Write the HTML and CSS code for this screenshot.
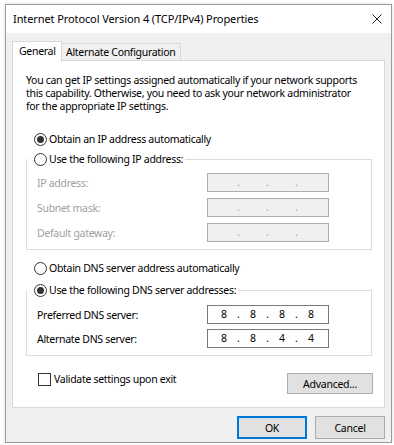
FILE: index.html
```html
<!DOCTYPE html>
<html lang="en">
<head>
    <meta charset="UTF-8">
    <title>Internet Protocol Version 4 (TCP/IPv4) Properties</title>
    <link rel="stylesheet" href="styles.css">
</head>
<body>
<div class="window">
    <!-- Title bar -->
    <div class="titlebar">
        <span class="title">Internet Protocol Version 4 (TCP/IPv4) Properties</span>
        <svg class="close" width="10" height="10" viewBox="0 0 10 10">
            <path d="M0.5 0.5 L9.5 9.5 M9.5 0.5 L0.5 9.5" stroke="#222" stroke-width="1" fill="none"/>
        </svg>
    </div>

    <div class="content">
        <div class="tabs">
            <div class="tab active">General</div>
            <div class="tab">Alternate Configuration</div>
        </div>

        <div class="panel">
            <p class="intro">You can get IP settings assigned automatically if your network supports<br>
                this capability. Otherwise, you need to ask your network administrator<br>
                for the appropriate IP settings.</p>

            <div class="option first"><span class="radio checked"></span>Obtain an IP address automatically</div>

            <fieldset class="group">
                <legend><span class="option"><span class="radio"></span>Use the following IP address:</span></legend>
                <div class="row disabled">
                    <span class="label">IP address:</span>
                    <div class="ipbox"><span></span><span>.</span><span></span><span>.</span><span></span><span>.</span><span></span></div>
                </div>
                <div class="row disabled">
                    <span class="label">Subnet mask:</span>
                    <div class="ipbox"><span></span><span>.</span><span></span><span>.</span><span></span><span>.</span><span></span></div>
                </div>
                <div class="row disabled">
                    <span class="label">Default gateway:</span>
                    <div class="ipbox"><span></span><span>.</span><span></span><span>.</span><span></span><span>.</span><span></span></div>
                </div>
            </fieldset>

            <div class="option dns-auto"><span class="radio"></span>Obtain DNS server address automatically</div>

            <fieldset class="group dns">
                <legend><span class="option"><span class="radio checked"></span>Use the following DNS server addresses:</span></legend>
                <div class="row">
                    <span class="label">Preferred DNS server:</span>
                    <div class="ipbox"><span>8</span><span>.</span><span>8</span><span>.</span><span>8</span><span>.</span><span>8</span></div>
                </div>
                <div class="row">
                    <span class="label">Alternate DNS server:</span>
                    <div class="ipbox"><span>8</span><span>.</span><span>8</span><span>.</span><span>4</span><span>.</span><span>4</span></div>
                </div>
            </fieldset>

            <div class="panel-footer">
                <label class="check"><span class="checkbox"></span>Validate settings upon exit</label>
                <button class="btn advanced">Advanced...</button>
            </div>
        </div>

        <div class="dialog-buttons">
            <button class="btn default">OK</button>
            <button class="btn">Cancel</button>
        </div>
    </div>
</div>
</body>
</html>
```
FILE: styles.css
```css
/* Reset */
* {
    box-sizing: border-box;
    margin: 0;
    padding: 0;
}

body {
    font-family: "Noto Sans", "Open Sans", sans-serif;
    font-size: 10.5px;
    letter-spacing: -0.3px;
    color: #000;
    background-color: #fff;
    white-space: nowrap;
}

/* Window frame */
.window {
    width: 387px;
    height: 439px;
    margin: 4px 0 0 5px;
    border: 1px solid #9a9a9a;
    background-color: #f0f0f0;
    box-shadow: 0 0 3px rgba(0, 0, 0, 0.15);
}

.titlebar {
    height: 28px;
    background-color: #fff;
    display: flex;
    align-items: center;
    padding: 0 8px 1px 7px;
}

.title {
    flex: 1;
    font-size: 11px;
    letter-spacing: -0.1px;
}

.close {
    display: block;
    margin: 0 1px 0 0;
}

.content {
    padding: 8px 6px 0 6px;
}

/* Tabs */
.tabs {
    display: flex;
    align-items: flex-end;
    height: 19px;
    position: relative;
    z-index: 1;
}

.tab {
    height: 17px;
    line-height: 16px;
    padding: 0 4px;
    border: 1px solid #d9d9d9;
    border-left: none;
    border-bottom: none;
    background-color: #f0f0f0;
}

.tab.active {
    height: 21px;
    margin-bottom: -2px;
    padding: 1px 0 0 6px;
    width: 50px;
    background-color: #fff;
    border-left: 1px solid #d9d9d9;
}

.panel {
    height: 348px;
    border: 1px solid #d9d9d9;
    background-color: #fff;
    padding: 13px 11px 0 13px;
}

.intro {
    line-height: 13px;
}

/* Radio and check controls */
.option {
    display: flex;
    align-items: center;
    height: 20px;
    padding-left: 8px;
}

.option.first {
    margin-top: 16px;
}

.radio {
    width: 13px;
    height: 13px;
    border: 1px solid #333;
    border-radius: 50%;
    background-color: #fff;
    margin-right: 2px;
    position: relative;
    flex-shrink: 0;
}

.radio.checked::after {
    content: "";
    position: absolute;
    left: 2px;
    top: 2px;
    width: 7px;
    height: 7px;
    border-radius: 50%;
    background-color: #333;
}

/* Group boxes */
.group {
    border: 1px solid #dcdcdc;
    width: 346px;
    padding: 0 0 7px 0;
    min-width: 0;
}

.group legend {
    padding: 0 2px 0 0;
}

.group legend .option {
    padding-left: 7px;
}

.dns-auto {
    margin-top: 8px;
}

.group.dns {
    margin-top: 2px;
}

.row {
    display: flex;
    align-items: center;
    margin: 6px 0 0 10px;
    height: 19px;
}

legend + .row {
    margin-top: 4px;
}

.dns .row {
    margin-top: 5px;
}

.label {
    width: 170px;
}

.row.disabled .label {
    color: #a0a0a0;
}

.ipbox {
    width: 122px;
    height: 19px;
    border: 1px solid #7a7a7a;
    background-color: #fff;
    display: grid;
    grid-template-columns: 16px 13px 16px 13px 16px 13px 16px;
    padding-left: 8px;
    text-align: center;
    line-height: 16px;
    letter-spacing: 0;
}

.row.disabled .ipbox {
    border-color: #adadad;
    background-color: #f0f0f0;
    color: #a0a0a0;
}

/* Footer inside panel */
.panel-footer {
    display: flex;
    justify-content: space-between;
    align-items: flex-start;
    margin-top: 16px;
    padding-left: 12px;
}

.check {
    display: flex;
    align-items: center;
    height: 14px;
}

.checkbox {
    width: 13px;
    height: 13px;
    border: 1px solid #333;
    background-color: #fff;
    margin-right: 3px;
}

/* Buttons */
.btn {
    font-family: inherit;
    font-size: 10.5px;
    letter-spacing: -0.25px;
    color: #000;
    background-color: #e1e1e1;
    border: 1px solid #adadad;
    height: 23px;
    width: 70px;
}

.btn.advanced {
    width: 86px;
    height: 21px;
    margin-top: 1px;
}

.btn.default {
    border: 2px solid #0078d7;
}

.dialog-buttons {
    display: flex;
    justify-content: flex-end;
    gap: 8px;
    margin-top: 8px;
}
```
